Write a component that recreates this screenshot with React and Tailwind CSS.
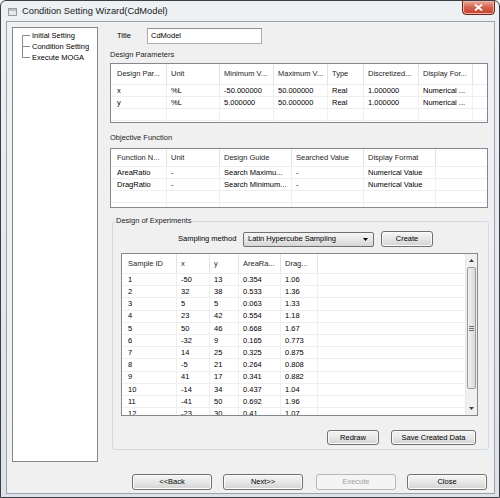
import React from "react";

const paramCols = [
  { label: "Design Par...", w: "w-[56px]" },
  { label: "Unit", w: "w-[53px]" },
  { label: "Minimum V...", w: "w-[54px]" },
  { label: "Maximum V...", w: "w-[54px]" },
  { label: "Type", w: "w-[36px]" },
  { label: "Discretized...", w: "w-[55px]" },
  { label: "Display For...", w: "w-[54px]" },
];

const paramRows = [
  ["x", "%L", "-50.000000", "50.000000", "Real", "1.000000", "Numerical ..."],
  ["y", "%L", "5.000000", "50.000000", "Real", "1.000000", "Numerical ..."],
  [],
  [],
];

const objCols = [
  { label: "Function N...", w: "w-[56px]" },
  { label: "Unit", w: "w-[53px]" },
  { label: "Design Guide", w: "w-[72px]" },
  { label: "Searched Value", w: "w-[72px]" },
  { label: "Display Format", w: "w-[72px]" },
];

const objRows = [
  ["AreaRatio", "-", "Search Maximu...", "-", "Numerical Value"],
  ["DragRatio", "-", "Search Minimum...", "-", "Numerical Value"],
  [],
  [],
];

const sampleCols = [
  { label: "Sample ID", w: "w-[55px]" },
  { label: "x", w: "w-[33px]" },
  { label: "y", w: "w-[29px]" },
  { label: "AreaRa...", w: "w-[42px]" },
  { label: "Drag...", w: "w-[37px]" },
];

const sampleRows = [
  ["1", "-50", "13", "0.354", "1.06"],
  ["2", "32", "38", "0.533", "1.36"],
  ["3", "5", "5", "0.063", "1.33"],
  ["4", "23", "42", "0.554", "1.18"],
  ["5", "50", "46", "0.668", "1.67"],
  ["6", "-32", "9", "0.165", "0.773"],
  ["7", "14", "25", "0.325", "0.875"],
  ["8", "-5", "21", "0.264", "0.808"],
  ["9", "41", "17", "0.341", "0.882"],
  ["10", "-14", "34", "0.437", "1.04"],
  ["11", "-41", "50", "0.692", "1.96"],
  ["12", "-23", "30", "0.41", "1.07"],
];

const Btn = ({ children, className = "", disabled }) => (
  <div
    className={`flex shrink-0 items-center justify-center rounded-[3px] border text-[7.5px] ${
      disabled
        ? "border-[#b5b9bc] bg-[#f4f4f4] text-[#a3a3a3]"
        : "border-[#707070] bg-linear-to-b from-[#f5f5f5] via-[#e7e7e7] to-[#d3d3d3] text-black shadow-[inset_0_0_0_1px_#fbfbfb]"
    } ${className}`}
  >
    {children}
  </div>
);

const Scrollbar = () => (
  <div className="flex w-[12px] shrink-0 flex-col bg-[#f0f0f0] border-l border-[#e8e8e8]">
    <div className="flex h-[13px] items-center justify-center">
      <svg width="5" height="3" viewBox="0 0 5 3"><path d="M0 3 L2.5 0 L5 3 Z" fill="#404040" /></svg>
    </div>
    <div className="mx-[1px] flex h-[122px] flex-col items-center justify-center gap-[1px] rounded-[2px] border border-[#9a9a9a] bg-linear-to-r from-[#f3f3f3] to-[#d9d9d9]">
      <div className="h-px w-[5px] bg-[#707070]" />
      <div className="h-px w-[5px] bg-[#707070]" />
      <div className="h-px w-[5px] bg-[#707070]" />
    </div>
    <div className="flex-1" />
    <div className="flex h-[13px] items-center justify-center">
      <svg width="5" height="3" viewBox="0 0 5 3"><path d="M0 0 L2.5 3 L5 0 Z" fill="#404040" /></svg>
    </div>
  </div>
);

const ListView = ({ cols, rows, headH, rowH, className = "", scroll }) => (
  <div className={`flex overflow-hidden border border-[#828790] bg-white ${className}`}>
    <div className="flex min-w-0 flex-1 flex-col">
      <div className={`flex shrink-0 ${headH}`}>
        {cols.map((c, i) => (
          <div
            key={i}
            className={`${c.w} flex shrink-0 items-center overflow-hidden whitespace-nowrap border-r border-[#e3e3e3] text-[#1e1e1e] ${i === 0 ? "pl-[6px]" : "pl-[4px]"}`}
          >
            {c.label}
          </div>
        ))}
        <div className="flex-1" />
      </div>
      {rows.map((r, ri) => (
        <div key={ri} className={`flex shrink-0 border-t border-[#efefef] ${rowH}`}>
          {cols.map((c, i) => (
            <div
              key={i}
              className={`${c.w} flex shrink-0 items-center overflow-hidden whitespace-nowrap border-r border-[#efefef] text-black ${i === 0 ? "pl-[6px]" : "pl-[4px]"}`}
            >
              {r[i] || ""}
            </div>
          ))}
          <div className="flex-1" />
        </div>
      ))}
    </div>
    {scroll && <Scrollbar />}
  </div>
);

const TreeRow = ({ label, kind }) => (
  <div className="flex h-[11px] items-center">
    <svg width="9" height="11" viewBox="0 0 9 11" className="shrink-0">
      <line
        x1="0.5"
        x2="0.5"
        y1={kind === "first" ? 5.5 : 0}
        y2={kind === "last" ? 5.5 : 11}
        stroke="#8a8a8a"
        strokeWidth="1"
      />
      <line x1="0.5" x2="8" y1="5.5" y2="5.5" stroke="#8a8a8a" strokeWidth="1" />
    </svg>
    <span className="ml-px whitespace-nowrap">{label}</span>
  </div>
);

export default function App() {
  return (
    <div className="flex h-[498px] w-[500px] flex-col overflow-hidden rounded-t-[6px] border border-[#3b3f44] bg-linear-to-b from-[#eef1f4] to-[#dde2e8] font-['Liberation_Sans',Arial,sans-serif] text-[7.5px] leading-none text-black">
      {/* title bar */}
      <div className="flex h-[20px] shrink-0 items-start">
        <svg width="9" height="8" viewBox="0 0 9 8" className="ml-[7px] mt-[7px] shrink-0">
          <rect x="0.5" y="0.5" width="8" height="7" fill="#e8e8e8" stroke="#9a9a9a" />
          <rect x="1" y="1" width="7" height="2" fill="#b8c2cc" />
        </svg>
        <div className="ml-[5px] mt-[6px] whitespace-nowrap text-[9.3px] text-[#1b1b1b]">
          Condition Setting Wizard(CdModel)
        </div>
        <div className="flex-1" />
        <div className="-mt-px mr-[4px] flex h-[15px] w-[33px] items-center justify-center rounded-b-[4px] border border-[#6e2419] bg-linear-to-b from-[#e9a99c] via-[#d4624f] to-[#c13e2b] shadow-[inset_0_0_0_1px_#f0b4a8]">
          <svg width="9" height="7" viewBox="0 0 9 7">
            <path d="M1 0.5 L8 6.5 M8 0.5 L1 6.5" stroke="#ffffff" strokeWidth="1.8" />
          </svg>
        </div>
      </div>

      {/* client area */}
      <div className="ml-[5px] flex h-[473px] w-[489px] flex-col border border-[#97a3af] bg-[#f0f0f0]">
        <div className="flex">
          {/* left tree */}
          <div className="ml-[5px] mt-[5px] h-[435px] w-[86px] shrink-0 border border-[#828790] bg-white pl-[9px] pt-[2px]">
            <TreeRow label="Initial Setting" kind="first" />
            <TreeRow label="Condition Setting" kind="mid" />
            <TreeRow label="Execute MOGA" kind="last" />
          </div>

          {/* right column */}
          <div className="ml-[12px] flex w-[379px] flex-col pt-[6px]">
            <div className="flex h-[16px] items-center">
              <div className="ml-[7px] w-[30px]">Title</div>
              <div className="flex h-[16px] w-[115px] items-center border border-[#abadb3] border-t-[#8e9196] bg-white pl-[3px]">
                CdModel
              </div>
            </div>

            <div className="mt-[5px] flex h-[12px] items-center text-[#1e1e1e]">Design Parameters</div>
            <ListView
              cols={paramCols}
              rows={paramRows}
              headH="h-[20px]"
              rowH="h-[12px]"
              className="mt-[2px] h-[60px] w-[378px]"
            />

            <div className="mt-[9px] flex h-[12px] items-center text-[#1e1e1e]">Objective Function</div>
            <ListView
              cols={objCols}
              rows={objRows}
              headH="h-[17px]"
              rowH="h-[12px]"
              className="mt-[4px] h-[60px] w-[378px]"
            />

            <fieldset className="ml-[2px] mt-[7px] h-[235px] w-[377px] rounded-[3px] border border-[#d3dbe1] px-0 pb-[4px]">
              <legend className="ml-[2px] h-[12px] px-[1px] leading-[12px] text-[#1e1e1e]">Design of Experiments</legend>

              <div className="mt-[4px] flex h-[16px] items-center pl-[65px]">
                <div className="w-[65px] whitespace-nowrap">Sampling method</div>
                <div className="flex h-[15px] w-[131px] items-center rounded-[2px] border border-[#707070] bg-linear-to-b from-[#f5f5f5] via-[#e7e7e7] to-[#d6d6d6] pl-[4px] pr-[5px]">
                  <span className="flex-1 whitespace-nowrap">Latin Hypercube Sampling</span>
                  <svg width="5" height="3" viewBox="0 0 5 3"><path d="M0 0 L2.5 3 L5 0 Z" fill="#000" /></svg>
                </div>
                <Btn className="ml-[7px] h-[16px] w-[52px]">Create</Btn>
              </div>

              <ListView
                cols={sampleCols}
                rows={sampleRows}
                headH="h-[19px]"
                rowH="h-[12.2px]"
                scroll
                className="ml-[8px] mt-[6px] h-[163px] w-[357px]"
              />

              <div className="mt-[14px] flex justify-end pr-[12px]">
                <Btn className="h-[15px] w-[52px]">Redraw</Btn>
                <Btn className="ml-[12px] h-[15px] w-[85px]">Save Created Data</Btn>
              </div>
            </fieldset>
          </div>
        </div>

        {/* bottom buttons */}
        <div className="mt-[12px] flex justify-end pr-[7px]">
          <Btn className="h-[16px] w-[80px]">&lt;&lt;Back</Btn>
          <Btn className="ml-[11px] h-[16px] w-[80px]">Next&gt;&gt;</Btn>
          <Btn className="ml-[13px] h-[16px] w-[80px]" disabled>Execute</Btn>
          <Btn className="ml-[11px] h-[16px] w-[80px]">Close</Btn>
        </div>
      </div>
    </div>
  );
}
